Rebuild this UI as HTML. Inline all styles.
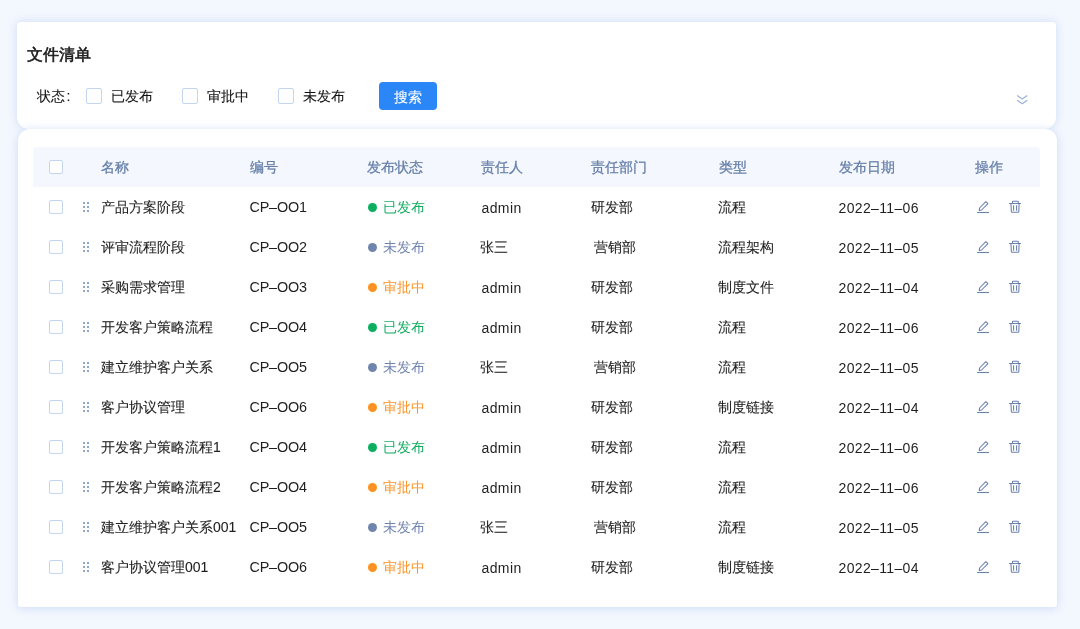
<!DOCTYPE html>
<html><head><meta charset="utf-8"><style>
*{margin:0;padding:0;box-sizing:border-box}
html,body{width:1080px;height:629px;overflow:hidden;-webkit-font-smoothing:antialiased;-webkit-text-stroke:.1px currentColor;background:#f3f7fe;font-family:"Liberation Sans",sans-serif;color:#1f1f1f}
.card1{position:absolute;left:17px;top:21.5px;width:1039px;height:107px;background:#fff;border-radius:4px 4px 12px 12px;box-shadow:0 0 8px rgba(185,208,243,.65)}
.card2{position:absolute;left:18px;top:128.5px;width:1039px;height:478px;background:#fff;border-radius:12px 12px 3px 3px;box-shadow:0 1px 8px rgba(185,208,243,.7)}
.title{position:absolute;left:27px;top:45px;font-size:16px;font-weight:normal;-webkit-text-stroke:.55px #1a1a1a;line-height:20px;color:#1a1a1a}
.lbl{position:absolute;top:88px;font-size:14px;line-height:16px;color:#141414}
.fcb{position:absolute;top:88px;width:16px;height:16px;border:1px solid #c3d5f1;border-radius:2px;background:#fff}
.btn{position:absolute;left:378.5px;top:81.5px;width:58.5px;height:28px;background:#2b87f8;border-radius:4px;color:#fff;font-size:14px;line-height:29px;padding-top:1px;text-align:center}
.chev{position:absolute;left:1015px;top:93px}
.thead{position:absolute;left:33px;top:147px;width:1007px;height:40px;background:#f4f8fe;border-radius:3px 3px 0 0}
.th{position:absolute;top:160px;font-size:14px;line-height:14px;color:#6880aa;-webkit-text-stroke:.3px #6880aa}
.row{position:absolute;left:0;width:1080px;height:40px}
.cb{position:absolute;left:49px;top:13px;width:14px;height:14px;border:1px solid #c3d5f1;border-radius:2px;background:#fff}
.hcb{left:49px;top:160px}
.drag{position:absolute;left:83px;top:15px;width:6px;height:10px}
.drag i{position:absolute;width:2px;height:2px;background:#93a6cc}
.drag i:nth-child(1){left:0;top:0}.drag i:nth-child(2){left:4px;top:0}
.drag i:nth-child(3){left:0;top:4px}.drag i:nth-child(4){left:4px;top:4px}
.drag i:nth-child(5){left:0;top:8px}.drag i:nth-child(6){left:4px;top:8px}
.c{position:absolute;top:13px;font-size:14px;line-height:14px;white-space:nowrap}
.c2,.c7,.adm{-webkit-text-stroke:0;top:14px}
.adm{letter-spacing:.4px;margin-left:-.5px}
.c1{left:101px}.c2{left:249.5px;top:13px;font-size:14.4px;letter-spacing:-.2px}.c3{left:368px;padding-left:15px}.c4{left:482px}.c5{left:591px}.c6{left:718px}.c7{left:838.5px;letter-spacing:.35px}
.c3{-webkit-text-stroke:0}
.c3 b{position:absolute;left:0;top:3px;width:9px;height:9px;border-radius:50%}
.sg{color:#13ad61}.sg b{background:#0aaf5f}
.sn{color:#7185ad}.sn b{background:#7085ad}
.so{color:#fd9526}.so b{background:#fd9220}
.ic{position:absolute;top:13px}
.ed{left:976px}.tr{left:1008px}
</style></head><body><div id="wrap" style="position:absolute;left:0;top:0;width:1080px;height:629px;will-change:transform">
<div class="card1"></div>
<div class="card2"></div>
<div class="title">文件清单</div>
<div class="lbl" style="left:37px">状态<span style="margin-left:1.5px">:</span></div>
<div class="fcb" style="left:86px"></div><div class="lbl" style="left:111px">已发布</div>
<div class="fcb" style="left:182px"></div><div class="lbl" style="left:207px">审批中</div>
<div class="fcb" style="left:278px"></div><div class="lbl" style="left:303px">未发布</div>
<div class="btn">搜索</div>
<svg class="chev" width="14" height="14" viewBox="0 0 14 14"><path d="M2.2 2.4 L7.25 5.9 L12.3 2.4 M2.2 7.2 L7.25 10.7 L12.3 7.2" fill="none" stroke="#9db2d7" stroke-width="1.25"/></svg>
<div class="thead"></div>
<span class="cb hcb"></span>
<div class="th" style="left:101px">名称</div>
<div class="th" style="left:250px">编号</div>
<div class="th" style="left:367px">发布状态</div>
<div class="th" style="left:481px">责任人</div>
<div class="th" style="left:591px">责任部门</div>
<div class="th" style="left:719px">类型</div>
<div class="th" style="left:839px">发布日期</div>
<div class="th" style="left:975px">操作</div>
<div class="row" style="top:187px">
<span class="cb"></span><span class="drag"><i></i><i></i><i></i><i></i><i></i><i></i></span>
<span class="c c1">产品方案阶段</span><span class="c c2">CP–OO1</span>
<span class="c c3 sg"><b></b>已发布</span>
<span class="c c4 adm">admin</span><span class="c c5">研发部</span>
<span class="c c6">流程</span><span class="c c7">2022–11–06</span>
<svg class="ic ed" width="14" height="14" viewBox="0 0 14 14"><path d="M9.8 1.6 L11.9 3.7 L5.6 10 L3.2 10.5 L3.6 8 Z" fill="none" stroke="#6a80ad" stroke-width="1.05" stroke-linejoin="round"/><path d="M1 12.5 H13" stroke="#6a80ad" stroke-width="1.1"/></svg><svg class="ic tr" width="14" height="14" viewBox="0 0 14 14"><path d="M1 3.5 H13" stroke="#6a80ad" stroke-width="1.05"/><path d="M4.5 3.5 V1.8 Q4.5 1.3 5 1.3 H9.8 Q10.3 1.3 10.3 1.8 V3.5" fill="none" stroke="#6a80ad" stroke-width="1.05"/><path d="M2.9 3.5 L3.4 11.6 Q3.45 12.2 4.1 12.2 H10.1 Q10.75 12.2 10.8 11.6 L11.1 3.5" fill="none" stroke="#6a80ad" stroke-width="1.05"/><path d="M5.6 5.2 V10.8 M8.6 5.2 V10.8" stroke="#6a80ad" stroke-width="1.05"/></svg>
</div>
<div class="row" style="top:227px">
<span class="cb"></span><span class="drag"><i></i><i></i><i></i><i></i><i></i><i></i></span>
<span class="c c1">评审流程阶段</span><span class="c c2">CP–OO2</span>
<span class="c c3 sn"><b></b>未发布</span>
<span class="c c4" style="left:480px">张三</span><span class="c c5" style="left:594px">营销部</span>
<span class="c c6">流程架构</span><span class="c c7">2022–11–05</span>
<svg class="ic ed" width="14" height="14" viewBox="0 0 14 14"><path d="M9.8 1.6 L11.9 3.7 L5.6 10 L3.2 10.5 L3.6 8 Z" fill="none" stroke="#6a80ad" stroke-width="1.05" stroke-linejoin="round"/><path d="M1 12.5 H13" stroke="#6a80ad" stroke-width="1.1"/></svg><svg class="ic tr" width="14" height="14" viewBox="0 0 14 14"><path d="M1 3.5 H13" stroke="#6a80ad" stroke-width="1.05"/><path d="M4.5 3.5 V1.8 Q4.5 1.3 5 1.3 H9.8 Q10.3 1.3 10.3 1.8 V3.5" fill="none" stroke="#6a80ad" stroke-width="1.05"/><path d="M2.9 3.5 L3.4 11.6 Q3.45 12.2 4.1 12.2 H10.1 Q10.75 12.2 10.8 11.6 L11.1 3.5" fill="none" stroke="#6a80ad" stroke-width="1.05"/><path d="M5.6 5.2 V10.8 M8.6 5.2 V10.8" stroke="#6a80ad" stroke-width="1.05"/></svg>
</div>
<div class="row" style="top:267px">
<span class="cb"></span><span class="drag"><i></i><i></i><i></i><i></i><i></i><i></i></span>
<span class="c c1">采购需求管理</span><span class="c c2">CP–OO3</span>
<span class="c c3 so"><b></b>审批中</span>
<span class="c c4 adm">admin</span><span class="c c5">研发部</span>
<span class="c c6">制度文件</span><span class="c c7">2022–11–04</span>
<svg class="ic ed" width="14" height="14" viewBox="0 0 14 14"><path d="M9.8 1.6 L11.9 3.7 L5.6 10 L3.2 10.5 L3.6 8 Z" fill="none" stroke="#6a80ad" stroke-width="1.05" stroke-linejoin="round"/><path d="M1 12.5 H13" stroke="#6a80ad" stroke-width="1.1"/></svg><svg class="ic tr" width="14" height="14" viewBox="0 0 14 14"><path d="M1 3.5 H13" stroke="#6a80ad" stroke-width="1.05"/><path d="M4.5 3.5 V1.8 Q4.5 1.3 5 1.3 H9.8 Q10.3 1.3 10.3 1.8 V3.5" fill="none" stroke="#6a80ad" stroke-width="1.05"/><path d="M2.9 3.5 L3.4 11.6 Q3.45 12.2 4.1 12.2 H10.1 Q10.75 12.2 10.8 11.6 L11.1 3.5" fill="none" stroke="#6a80ad" stroke-width="1.05"/><path d="M5.6 5.2 V10.8 M8.6 5.2 V10.8" stroke="#6a80ad" stroke-width="1.05"/></svg>
</div>
<div class="row" style="top:307px">
<span class="cb"></span><span class="drag"><i></i><i></i><i></i><i></i><i></i><i></i></span>
<span class="c c1">开发客户策略流程</span><span class="c c2">CP–OO4</span>
<span class="c c3 sg"><b></b>已发布</span>
<span class="c c4 adm">admin</span><span class="c c5">研发部</span>
<span class="c c6">流程</span><span class="c c7">2022–11–06</span>
<svg class="ic ed" width="14" height="14" viewBox="0 0 14 14"><path d="M9.8 1.6 L11.9 3.7 L5.6 10 L3.2 10.5 L3.6 8 Z" fill="none" stroke="#6a80ad" stroke-width="1.05" stroke-linejoin="round"/><path d="M1 12.5 H13" stroke="#6a80ad" stroke-width="1.1"/></svg><svg class="ic tr" width="14" height="14" viewBox="0 0 14 14"><path d="M1 3.5 H13" stroke="#6a80ad" stroke-width="1.05"/><path d="M4.5 3.5 V1.8 Q4.5 1.3 5 1.3 H9.8 Q10.3 1.3 10.3 1.8 V3.5" fill="none" stroke="#6a80ad" stroke-width="1.05"/><path d="M2.9 3.5 L3.4 11.6 Q3.45 12.2 4.1 12.2 H10.1 Q10.75 12.2 10.8 11.6 L11.1 3.5" fill="none" stroke="#6a80ad" stroke-width="1.05"/><path d="M5.6 5.2 V10.8 M8.6 5.2 V10.8" stroke="#6a80ad" stroke-width="1.05"/></svg>
</div>
<div class="row" style="top:347px">
<span class="cb"></span><span class="drag"><i></i><i></i><i></i><i></i><i></i><i></i></span>
<span class="c c1">建立维护客户关系</span><span class="c c2">CP–OO5</span>
<span class="c c3 sn"><b></b>未发布</span>
<span class="c c4" style="left:480px">张三</span><span class="c c5" style="left:594px">营销部</span>
<span class="c c6">流程</span><span class="c c7">2022–11–05</span>
<svg class="ic ed" width="14" height="14" viewBox="0 0 14 14"><path d="M9.8 1.6 L11.9 3.7 L5.6 10 L3.2 10.5 L3.6 8 Z" fill="none" stroke="#6a80ad" stroke-width="1.05" stroke-linejoin="round"/><path d="M1 12.5 H13" stroke="#6a80ad" stroke-width="1.1"/></svg><svg class="ic tr" width="14" height="14" viewBox="0 0 14 14"><path d="M1 3.5 H13" stroke="#6a80ad" stroke-width="1.05"/><path d="M4.5 3.5 V1.8 Q4.5 1.3 5 1.3 H9.8 Q10.3 1.3 10.3 1.8 V3.5" fill="none" stroke="#6a80ad" stroke-width="1.05"/><path d="M2.9 3.5 L3.4 11.6 Q3.45 12.2 4.1 12.2 H10.1 Q10.75 12.2 10.8 11.6 L11.1 3.5" fill="none" stroke="#6a80ad" stroke-width="1.05"/><path d="M5.6 5.2 V10.8 M8.6 5.2 V10.8" stroke="#6a80ad" stroke-width="1.05"/></svg>
</div>
<div class="row" style="top:387px">
<span class="cb"></span><span class="drag"><i></i><i></i><i></i><i></i><i></i><i></i></span>
<span class="c c1">客户协议管理</span><span class="c c2">CP–OO6</span>
<span class="c c3 so"><b></b>审批中</span>
<span class="c c4 adm">admin</span><span class="c c5">研发部</span>
<span class="c c6">制度链接</span><span class="c c7">2022–11–04</span>
<svg class="ic ed" width="14" height="14" viewBox="0 0 14 14"><path d="M9.8 1.6 L11.9 3.7 L5.6 10 L3.2 10.5 L3.6 8 Z" fill="none" stroke="#6a80ad" stroke-width="1.05" stroke-linejoin="round"/><path d="M1 12.5 H13" stroke="#6a80ad" stroke-width="1.1"/></svg><svg class="ic tr" width="14" height="14" viewBox="0 0 14 14"><path d="M1 3.5 H13" stroke="#6a80ad" stroke-width="1.05"/><path d="M4.5 3.5 V1.8 Q4.5 1.3 5 1.3 H9.8 Q10.3 1.3 10.3 1.8 V3.5" fill="none" stroke="#6a80ad" stroke-width="1.05"/><path d="M2.9 3.5 L3.4 11.6 Q3.45 12.2 4.1 12.2 H10.1 Q10.75 12.2 10.8 11.6 L11.1 3.5" fill="none" stroke="#6a80ad" stroke-width="1.05"/><path d="M5.6 5.2 V10.8 M8.6 5.2 V10.8" stroke="#6a80ad" stroke-width="1.05"/></svg>
</div>
<div class="row" style="top:427px">
<span class="cb"></span><span class="drag"><i></i><i></i><i></i><i></i><i></i><i></i></span>
<span class="c c1">开发客户策略流程1</span><span class="c c2">CP–OO4</span>
<span class="c c3 sg"><b></b>已发布</span>
<span class="c c4 adm">admin</span><span class="c c5">研发部</span>
<span class="c c6">流程</span><span class="c c7">2022–11–06</span>
<svg class="ic ed" width="14" height="14" viewBox="0 0 14 14"><path d="M9.8 1.6 L11.9 3.7 L5.6 10 L3.2 10.5 L3.6 8 Z" fill="none" stroke="#6a80ad" stroke-width="1.05" stroke-linejoin="round"/><path d="M1 12.5 H13" stroke="#6a80ad" stroke-width="1.1"/></svg><svg class="ic tr" width="14" height="14" viewBox="0 0 14 14"><path d="M1 3.5 H13" stroke="#6a80ad" stroke-width="1.05"/><path d="M4.5 3.5 V1.8 Q4.5 1.3 5 1.3 H9.8 Q10.3 1.3 10.3 1.8 V3.5" fill="none" stroke="#6a80ad" stroke-width="1.05"/><path d="M2.9 3.5 L3.4 11.6 Q3.45 12.2 4.1 12.2 H10.1 Q10.75 12.2 10.8 11.6 L11.1 3.5" fill="none" stroke="#6a80ad" stroke-width="1.05"/><path d="M5.6 5.2 V10.8 M8.6 5.2 V10.8" stroke="#6a80ad" stroke-width="1.05"/></svg>
</div>
<div class="row" style="top:467px">
<span class="cb"></span><span class="drag"><i></i><i></i><i></i><i></i><i></i><i></i></span>
<span class="c c1">开发客户策略流程2</span><span class="c c2">CP–OO4</span>
<span class="c c3 so"><b></b>审批中</span>
<span class="c c4 adm">admin</span><span class="c c5">研发部</span>
<span class="c c6">流程</span><span class="c c7">2022–11–06</span>
<svg class="ic ed" width="14" height="14" viewBox="0 0 14 14"><path d="M9.8 1.6 L11.9 3.7 L5.6 10 L3.2 10.5 L3.6 8 Z" fill="none" stroke="#6a80ad" stroke-width="1.05" stroke-linejoin="round"/><path d="M1 12.5 H13" stroke="#6a80ad" stroke-width="1.1"/></svg><svg class="ic tr" width="14" height="14" viewBox="0 0 14 14"><path d="M1 3.5 H13" stroke="#6a80ad" stroke-width="1.05"/><path d="M4.5 3.5 V1.8 Q4.5 1.3 5 1.3 H9.8 Q10.3 1.3 10.3 1.8 V3.5" fill="none" stroke="#6a80ad" stroke-width="1.05"/><path d="M2.9 3.5 L3.4 11.6 Q3.45 12.2 4.1 12.2 H10.1 Q10.75 12.2 10.8 11.6 L11.1 3.5" fill="none" stroke="#6a80ad" stroke-width="1.05"/><path d="M5.6 5.2 V10.8 M8.6 5.2 V10.8" stroke="#6a80ad" stroke-width="1.05"/></svg>
</div>
<div class="row" style="top:507px">
<span class="cb"></span><span class="drag"><i></i><i></i><i></i><i></i><i></i><i></i></span>
<span class="c c1">建立维护客户关系001</span><span class="c c2">CP–OO5</span>
<span class="c c3 sn"><b></b>未发布</span>
<span class="c c4" style="left:480px">张三</span><span class="c c5" style="left:594px">营销部</span>
<span class="c c6">流程</span><span class="c c7">2022–11–05</span>
<svg class="ic ed" width="14" height="14" viewBox="0 0 14 14"><path d="M9.8 1.6 L11.9 3.7 L5.6 10 L3.2 10.5 L3.6 8 Z" fill="none" stroke="#6a80ad" stroke-width="1.05" stroke-linejoin="round"/><path d="M1 12.5 H13" stroke="#6a80ad" stroke-width="1.1"/></svg><svg class="ic tr" width="14" height="14" viewBox="0 0 14 14"><path d="M1 3.5 H13" stroke="#6a80ad" stroke-width="1.05"/><path d="M4.5 3.5 V1.8 Q4.5 1.3 5 1.3 H9.8 Q10.3 1.3 10.3 1.8 V3.5" fill="none" stroke="#6a80ad" stroke-width="1.05"/><path d="M2.9 3.5 L3.4 11.6 Q3.45 12.2 4.1 12.2 H10.1 Q10.75 12.2 10.8 11.6 L11.1 3.5" fill="none" stroke="#6a80ad" stroke-width="1.05"/><path d="M5.6 5.2 V10.8 M8.6 5.2 V10.8" stroke="#6a80ad" stroke-width="1.05"/></svg>
</div>
<div class="row" style="top:547px">
<span class="cb"></span><span class="drag"><i></i><i></i><i></i><i></i><i></i><i></i></span>
<span class="c c1">客户协议管理001</span><span class="c c2">CP–OO6</span>
<span class="c c3 so"><b></b>审批中</span>
<span class="c c4 adm">admin</span><span class="c c5">研发部</span>
<span class="c c6">制度链接</span><span class="c c7">2022–11–04</span>
<svg class="ic ed" width="14" height="14" viewBox="0 0 14 14"><path d="M9.8 1.6 L11.9 3.7 L5.6 10 L3.2 10.5 L3.6 8 Z" fill="none" stroke="#6a80ad" stroke-width="1.05" stroke-linejoin="round"/><path d="M1 12.5 H13" stroke="#6a80ad" stroke-width="1.1"/></svg><svg class="ic tr" width="14" height="14" viewBox="0 0 14 14"><path d="M1 3.5 H13" stroke="#6a80ad" stroke-width="1.05"/><path d="M4.5 3.5 V1.8 Q4.5 1.3 5 1.3 H9.8 Q10.3 1.3 10.3 1.8 V3.5" fill="none" stroke="#6a80ad" stroke-width="1.05"/><path d="M2.9 3.5 L3.4 11.6 Q3.45 12.2 4.1 12.2 H10.1 Q10.75 12.2 10.8 11.6 L11.1 3.5" fill="none" stroke="#6a80ad" stroke-width="1.05"/><path d="M5.6 5.2 V10.8 M8.6 5.2 V10.8" stroke="#6a80ad" stroke-width="1.05"/></svg>
</div>
</body></html>
